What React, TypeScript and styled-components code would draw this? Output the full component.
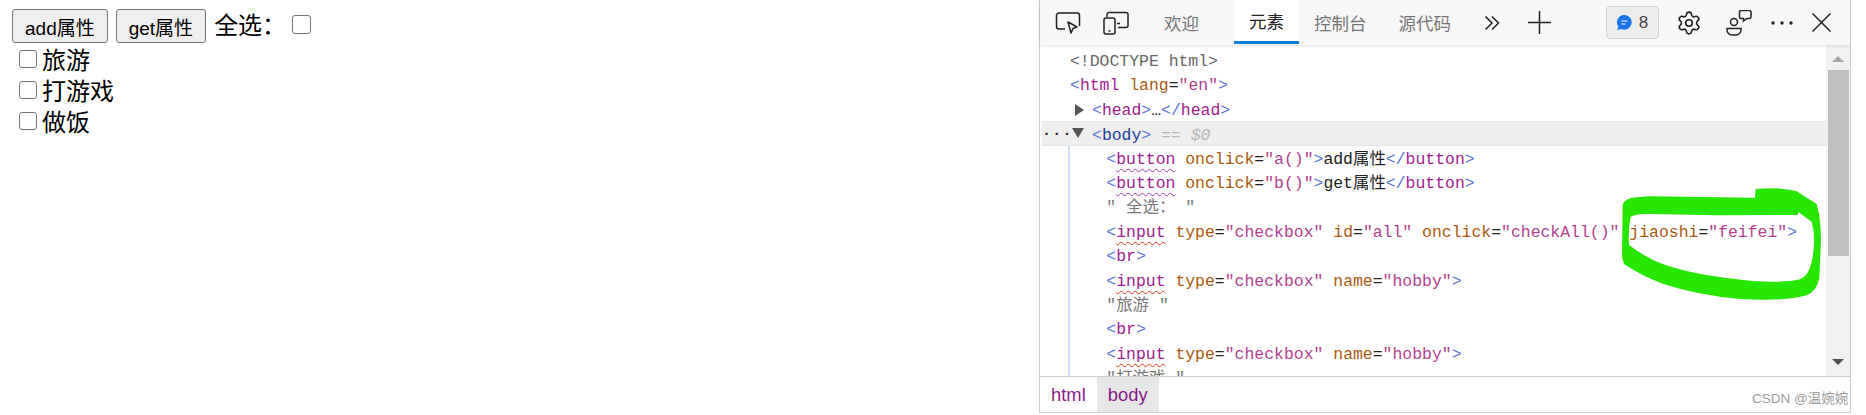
import React from 'react';
import styled, { createGlobalStyle } from 'styled-components';
import { Settings } from 'lucide-react';

const CJK = '"Noto Sans CJK SC"';
const MONO = `"Liberation Mono", ${CJK}, monospace`;

const GlobalStyle = createGlobalStyle`
  html, body {
    margin: 0;
    padding: 0;
    background: #fff;
    overflow: hidden;
  }
`;

const Screen = styled.div`
  position: relative;
  display: flex;
  width: 1866px;
  height: 415px;
  overflow: hidden;
  font-family: "Liberation Sans", ${CJK}, sans-serif;
`;

const Page = styled.div`
  width: 1039px;
  flex: none;
  padding: 9px 0 0 12px;
  box-sizing: border-box;
  color: #000;
`;

const PageLine = styled.div`
  display: flex;
  align-items: center;
  height: 34px;
`;

const PageButton = styled.button`
  height: 34px;
  padding: 0 12px;
  margin-right: 8px;
  box-sizing: border-box;
  font-family: inherit;
  font-size: 19px;
  color: #000;
  background: #efefef;
  border: 1px solid #767676;
  border-radius: 3px;
`;

const PageText = styled.span`
  font-size: 24px;
  line-height: 30px;
`;

const Box = styled.span<{ $size: number; $left?: number }>`
  display: inline-block;
  width: ${(p) => p.$size}px;
  height: ${(p) => p.$size}px;
  margin: 0 5px 3px ${(p) => p.$left ?? 0}px;
  box-sizing: border-box;
  background: #fff;
  border: 1.5px solid #767676;
  border-radius: 3px;
  flex: none;
`;

const HobbyList = styled.div`
  display: flex;
  flex-direction: column;
  margin: 2px 0 0 7px;
`;

const HobbyRow = styled.div`
  display: flex;
  align-items: center;
  height: 31px;
`;

const DevTools = styled.div`
  width: 812px;
  height: 413px;
  flex: none;
  display: flex;
  flex-direction: column;
  box-sizing: border-box;
  border-left: 1.5px solid #cdcdcd;
  border-right: 1.5px solid #cdcdcd;
  border-bottom: 1px solid #cdcdd4;
`;

const Toolbar = styled.div`
  height: 45px;
  flex: none;
  display: flex;
  align-items: stretch;
  padding: 0 9px 0 4px;
  background: #f7f7f7;
  box-shadow: 0 1px 3px rgba(0, 0, 0, 0.12);
  position: relative;
`;

const IconSlot = styled.div<{ $w?: number }>`
  width: ${(p) => p.$w ?? 48}px;
  display: flex;
  align-items: center;
  justify-content: center;
  flex: none;
  color: #222;
`;

const Tab = styled.div<{ $active?: boolean; $before?: number }>`
  display: flex;
  align-items: center;
  padding: 0 15px;
  margin-left: ${(p) => p.$before ?? 0}px;
  font-size: 17.5px;
  color: ${(p) => (p.$active ? '#222' : '#777')};
  background: ${(p) => (p.$active ? '#fff' : 'transparent')};
  border-radius: 4px 4px 0 0;
  height: ${(p) => (p.$active ? '41px' : 'auto')};
  border-bottom: ${(p) => (p.$active ? '3px solid #0f7fd8' : 'none')};
`;

const Spacer = styled.div`
  flex: 1;
`;

const Badge = styled.div`
  align-self: center;
  width: 53px;
  height: 33px;
  margin-right: 4px;
  display: flex;
  align-items: center;
  justify-content: center;
  gap: 7px;
  box-sizing: border-box;
  background: #ececec;
  border: 1px solid #d2d2d6;
  border-radius: 4px;
  font-size: 17px;
  color: #444;
`;

const CodeArea = styled.div`
  flex: 1;
  min-height: 0;
  display: flex;
`;

const Code = styled.div`
  flex: 1;
  min-width: 0;
  padding: 3px 0 0 2px;
  overflow: hidden;
  font-family: ${MONO};
  font-size: 16.45px;
  white-space: pre;
`;

const Row = styled.div<{ $indent: number; $selected?: boolean }>`
  position: relative;
  height: 24.4px;
  line-height: 28px;
  padding-left: ${(p) => p.$indent}px;
  box-sizing: border-box;
  background: ${(p) => (p.$selected ? '#eeeeee' : 'transparent')};
  border-top: ${(p) => (p.$selected ? '1px solid #e4e4e4' : 'none')};
  border-bottom: ${(p) => (p.$selected ? '1px solid #e4e4e4' : 'none')};
`;

const Children = styled.div`
  margin-left: 26px;
  border-left: 2.5px solid #d0e1f5;
`;

const Dots = styled.span`
  position: absolute;
  left: 0;
  top: -4px;
  color: #222;
  letter-spacing: 1.3px;
  font-weight: bold;
  font-size: 15px;
`;

const Caret = styled.span<{ $open?: boolean }>`
  position: absolute;
  left: ${(p) => (p.$open ? 30 : 33)}px;
  top: ${(p) => (p.$open ? 6 : 7)}px;
  width: 0;
  height: 0;
  border-style: solid;
  border-color: transparent;
  ${(p) =>
    p.$open
      ? 'border-width: 10px 6px 0 6px; border-top-color: #555;'
      : 'border-width: 6px 0 6px 9px; border-left-color: #555;'}
`;

const Bracket = styled.span`
  color: #5a74d6;
`;
const TagName = styled.span<{ $dark?: boolean; $wave?: string }>`
  color: ${(p) => (p.$dark ? '#21409a' : '#a0208e')};
  ${(p) =>
    p.$wave
      ? `text-decoration: underline wavy ${p.$wave} 1.3px; text-underline-offset: 4px;`
      : ''}
`;
const AttrName = styled.span`
  color: #a8590f;
`;
const AttrValue = styled.span`
  color: #b23f8d;
`;
const Plain = styled.span`
  color: #222;
`;
const Doctype = styled.span`
  color: #666;
`;
const Quoted = styled.span`
  color: #777;
`;
const Muted = styled.span`
  color: #b8b8b8;
  font-style: italic;
`;

const Scrollbar = styled.div`
  width: 24px;
  flex: none;
  display: flex;
  flex-direction: column;
  align-items: center;
  background: #f1f1f1;
`;

const ArrowUp = styled.span`
  margin-top: 11px;
  border-style: solid;
  border-width: 0 6px 6px 6px;
  border-color: transparent transparent #a6a6a6 transparent;
`;

const Thumb = styled.div`
  width: 21px;
  height: 186px;
  margin-top: 8px;
  background: #bfbfbf;
`;

const ArrowDown = styled.span`
  margin-top: auto;
  margin-bottom: 11px;
  border-style: solid;
  border-width: 6px 6px 0 6px;
  border-color: #505050 transparent transparent transparent;
`;

const Breadcrumbs = styled.div`
  height: 36px;
  flex: none;
  display: flex;
  background: #fff;
  border-top: 1.5px solid #cdcdd4;
  box-sizing: border-box;
`;

const Crumb = styled.div<{ $active?: boolean }>`
  display: flex;
  align-items: center;
  padding: 0 11px;
  font-size: 18.4px;
  color: #8a1a8a;
  background: ${(p) => (p.$active ? '#e7e7e7' : 'transparent')};
`;

const Highlight = styled.svg`
  position: absolute;
  left: 1450px;
  top: 150px;
  pointer-events: none;
`;

const Watermark = styled.div`
  position: absolute;
  right: 16px;
  top: 387px;
  width: 98px;
  overflow: hidden;
  white-space: nowrap;
  font-size: 13.5px;
  color: #9c9c9c;
`;

const InspectIcon = () => (
  <svg width="26" height="24" viewBox="0 0 26 24" fill="none" stroke="#222" strokeWidth="1.5">
    <path d="M10 18H4a2.5 2.5 0 0 1-2.500-2.500V4.500A2.500 2.500 0 0 1 4 2h18a2.500 2.500 0 0 1 2.500 2.500V15" />
    <path d="M13 11l9 5-4 1.500-2 4.500z" strokeLinejoin="round" />
  </svg>
);

const DeviceIcon = () => (
  <svg width="26" height="24" viewBox="0 0 26 24" fill="none" stroke="#222" strokeWidth="1.500">
    <path d="M4 6V3.500A2 2 0 0 1 6 1.500h17A2 2 0 0 1 25 3.500v11a2 2 0 0 1-2 2h-8" />
    <rect x="1" y="7" width="11" height="16" rx="2" />
    <path d="M5.500 20h2M14 12.500h3" />
  </svg>
);

const ChevronsIcon = () => (
  <svg width="16" height="16" viewBox="0 0 16 16" fill="none" stroke="#222" strokeWidth="1.500">
    <path d="M1.500 1.500L8 8l-6.500 6.500M8 1.500L14.500 8 8 14.500" />
  </svg>
);

const PlusIcon = () => (
  <svg width="23" height="23" viewBox="0 0 23 23" fill="none" stroke="#222" strokeWidth="1.500">
    <path d="M11.500 0v23M0 11.500h23" />
  </svg>
);

const MessageIcon = () => (
  <svg width="15" height="15" viewBox="0 0 15 15">
    <path d="M7.500 0a7.300 7.300 0 1 1-3.300 13.900L0.300 15l1-3.600A7.300 7.300 0 0 1 7.500 0z" fill="#1a73e8" />
    <path d="M4.500 6h6M4.500 9h4" stroke="#fff" strokeWidth="1" />
  </svg>
);

const FeedbackIcon = () => (
  <svg width="26" height="26" viewBox="0 0 26 26" fill="none" stroke="#222" strokeWidth="1.500">
    <circle cx="8" cy="12" r="3.500" />
    <path d="M1 18.500h14v1.500a5 5 0 0 1-5 5H6a5 5 0 0 1-5-5z" />
    <path d="M13.500 2a1.500 1.500 0 0 1 1.500-1.500h8.500A1.500 1.500 0 0 1 25 2v5a1.500 1.500 0 0 1-1.500 1.500H21L17.500 11V8.500H15A1.500 1.500 0 0 1 13.500 7z" />
  </svg>
);

const MoreIcon = () => (
  <svg width="24" height="6" viewBox="0 0 24 6" fill="#222">
    <circle cx="3" cy="3" r="1.700" />
    <circle cx="12" cy="3" r="1.700" />
    <circle cx="21" cy="3" r="1.700" />
  </svg>
);

const CloseIcon = () => (
  <svg width="19" height="19" viewBox="0 0 19 19" fill="none" stroke="#222" strokeWidth="1.500">
    <path d="M0.500 0.500l18 18M18.500 0.500l-18 18" />
  </svg>
);

const Tag = ({
  name,
  wave,
  attrs = [],
}: {
  name: string;
  wave?: string;
  attrs?: [string, string][];
}) => (
  <>
    <Bracket>{'<'}</Bracket>
    <TagName $wave={wave}>{name}</TagName>
    {attrs.map(([k, v]) => (
      <React.Fragment key={k}>
        {' '}
        <AttrName>{k}</AttrName>
        <Plain>=</Plain>
        <AttrValue>"{v}"</AttrValue>
      </React.Fragment>
    ))}
    <Bracket>{'>'}</Bracket>
  </>
);

const PURPLE = '#a03cb0';
const RED = '#d4380d';
const CHILD_INDENT = 36.3;

const ButtonLine = ({ fn, label }: { fn: string; label: string }) => (
  <Row $indent={CHILD_INDENT}>
    <Tag name="button" wave={PURPLE} attrs={[['onclick', fn]]} />
    <Plain>{label}</Plain>
    <Bracket>{'</'}</Bracket>
    <TagName>button</TagName>
    <Bracket>{'>'}</Bracket>
  </Row>
);

export default function App() {
  return (
    <Screen>
      <GlobalStyle />
      <Page>
        <PageLine>
          <PageButton>add属性</PageButton>
          <PageButton>get属性</PageButton>
          <PageText>全选：</PageText>
          <Box $size={19} $left={6} />
        </PageLine>
        <HobbyList>
          {['旅游', '打游戏', '做饭'].map((t) => (
            <HobbyRow key={t}>
              <Box $size={18} />
              <PageText>{t}</PageText>
            </HobbyRow>
          ))}
        </HobbyList>
      </Page>
      <DevTools>
        <Toolbar>
          <IconSlot><InspectIcon /></IconSlot>
          <IconSlot><DeviceIcon /></IconSlot>
          <Tab $before={9}>欢迎</Tab>
          <Tab $active $before={20}>元素</Tab>
          <Tab>控制台</Tab>
          <Tab $before={2}>源代码</Tab>
          <IconSlot $w={52}><ChevronsIcon /></IconSlot>
          <IconSlot $w={43}><PlusIcon /></IconSlot>
          <Spacer />
          <Badge><MessageIcon />8</Badge>
          <IconSlot $w={52}><Settings size={26} strokeWidth={1.5} /></IconSlot>
          <IconSlot $w={48}><FeedbackIcon /></IconSlot>
          <IconSlot $w={38}><MoreIcon /></IconSlot>
          <IconSlot $w={40}><CloseIcon /></IconSlot>
        </Toolbar>
        <CodeArea>
          <Code>
            <Row $indent={28}><Doctype>{'<!DOCTYPE html>'}</Doctype></Row>
            <Row $indent={28}><Tag name="html" attrs={[['lang', 'en']]} /></Row>
            <Row $indent={50}>
              <Caret />
              <Bracket>{'<'}</Bracket><TagName>head</TagName><Bracket>{'>'}</Bracket>
              <Plain>…</Plain>
              <Bracket>{'</'}</Bracket><TagName>head</TagName><Bracket>{'>'}</Bracket>
            </Row>
            <Row $indent={50} $selected>
              <Dots>...</Dots>
              <Caret $open />
              <Bracket>{'<'}</Bracket><TagName $dark>body</TagName><Bracket>{'>'}</Bracket>
              {' '}<Muted>== $0</Muted>
            </Row>
            <Children>
              <ButtonLine fn="a()" label="add属性" />
              <ButtonLine fn="b()" label="get属性" />
              <Row $indent={CHILD_INDENT}><Quoted>" 全选： "</Quoted></Row>
              <Row $indent={CHILD_INDENT}>
                <Tag
                  name="input"
                  wave={RED}
                  attrs={[['type', 'checkbox'], ['id', 'all'], ['onclick', 'checkAll()'], ['jiaoshi', 'feifei']]}
                />
              </Row>
              <Row $indent={CHILD_INDENT}><Tag name="br" /></Row>
              <Row $indent={CHILD_INDENT}>
                <Tag name="input" wave={RED} attrs={[['type', 'checkbox'], ['name', 'hobby']]} />
              </Row>
              <Row $indent={CHILD_INDENT}><Quoted>"旅游 "</Quoted></Row>
              <Row $indent={CHILD_INDENT}><Tag name="br" /></Row>
              <Row $indent={CHILD_INDENT}>
                <Tag name="input" wave={RED} attrs={[['type', 'checkbox'], ['name', 'hobby']]} />
              </Row>
              <Row $indent={CHILD_INDENT}><Quoted>"打游戏 "</Quoted></Row>
            </Children>
          </Code>
          <Scrollbar>
            <ArrowUp />
            <Thumb />
            <ArrowDown />
          </Scrollbar>
        </CodeArea>
        <Breadcrumbs>
          <Crumb>html</Crumb>
          <Crumb $active>body</Crumb>
        </Breadcrumbs>
      </DevTools>
      <Highlight width="416" height="265" viewBox="0 0 1248 795">
        <path
          fillRule="evenodd"
          fill="#27e600"
          d="M518 165 Q522 145 560 142 L600 139 L915 143 L917 117 Q990 110 1040 124 L1100 162 Q1112 200 1113 270 L1108 385 Q1100 425 1070 436 Q1000 455 870 447 Q740 435 640 402 Q570 375 522 342 L516 320 Z
             M542 200 Q534 240 537 285 Q590 325 640 343 Q740 378 900 392 Q1000 400 1050 388 Q1080 375 1088 320 Q1098 260 1085 215 L1045 186 L1043 195 L800 196 L600 192 Q560 190 542 200 Z"
        />
      </Highlight>
      <Watermark>CSDN @温婉婉</Watermark>
    </Screen>
  );
}
